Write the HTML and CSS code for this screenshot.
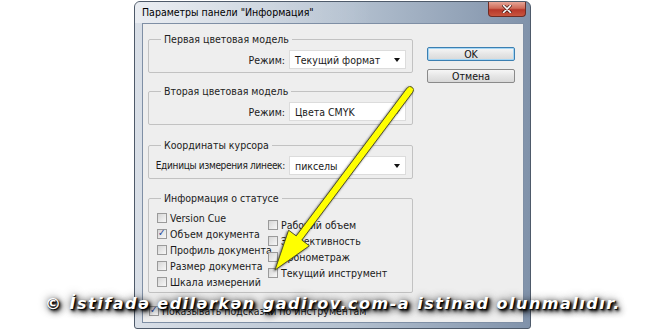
FILE: index.html
```html
<!DOCTYPE html>
<html lang="ru">
<head>
  <meta charset="UTF-8">
  <title>Параметры панели "Информация"</title>
  <link rel="stylesheet" href="styles.css">
</head>
<body>
  <div class="window">
    <div class="titlebar">
      <span class="title">Параметры панели "Информация"</span>
      <span class="close">
        <svg width="10" height="8" viewBox="0 0 10 8"><path d="M1.5 0.5 L8.5 7.5 M8.5 0.5 L1.5 7.5" stroke="#3b1712" stroke-width="3" stroke-linecap="round"/><path d="M1.5 0.5 L8.5 7.5 M8.5 0.5 L1.5 7.5" stroke="#fff" stroke-width="1.6" stroke-linecap="round"/></svg>
      </span>
    </div>
    <div class="client">
      <div class="main">
        <fieldset class="group">
          <legend>Первая цветовая модель</legend>
          <div class="row">
            <span class="label">Режим:</span>
            <div class="select">Текущий формат<span class="caret"></span></div>
          </div>
        </fieldset>
        <fieldset class="group">
          <legend>Вторая цветовая модель</legend>
          <div class="row">
            <span class="label">Режим:</span>
            <div class="select">Цвета CMYK<span class="caret"></span></div>
          </div>
        </fieldset>
        <fieldset class="group cursor">
          <legend>Координаты курсора</legend>
          <div class="row">
            <span class="label label-long">Единицы измерения линеек:</span>
            <div class="select">пикселы<span class="caret"></span></div>
          </div>
        </fieldset>
        <fieldset class="group status">
          <legend>Информация о статусе</legend>
          <div class="cols">
            <div class="col">
              <div class="check"><span class="box"></span>Version Cue</div>
              <div class="check"><span class="box checked"></span>Объем документа</div>
              <div class="check"><span class="box"></span>Профиль документа</div>
              <div class="check"><span class="box"></span>Размер документа</div>
              <div class="check"><span class="box"></span>Шкала измерений</div>
            </div>
            <div class="col col-right">
              <div class="check"><span class="box"></span>Рабочий объем</div>
              <div class="check"><span class="box"></span>Эффективность</div>
              <div class="check"><span class="box"></span>Хронометраж</div>
              <div class="check"><span class="box"></span>Текущий инструмент</div>
            </div>
          </div>
        </fieldset>
        <div class="check tips"><span class="box checked"></span>Показывать подсказки по инструментам</div>
      </div>
      <div class="buttons">
        <div class="btn btn-default">OK</div>
        <div class="btn">Отмена</div>
      </div>
    </div>
  </div>

  <svg class="arrow" width="660" height="330" viewBox="0 0 660 330">
    <path d="M407.2 87.9 L296.2 235.9 L288.6 230.2 L275 270 L309.4 245.8 L301.8 240.1 L412.8 92.1 A3.5 3.5 0 0 0 407.2 87.9 Z" fill="#ffff00" stroke="#55552a" stroke-width="1" stroke-linejoin="round"/>
  </svg>

  <div class="watermark">© İstifadə edilərkən gadirov.com-a istinad olunmalıdır.</div>
</body>
</html>
```

FILE: styles.css
```css
body {
  margin: 0;
  width: 660px;
  height: 330px;
  overflow: hidden;
  position: relative;
  background-color: #fff;
  color: #1a1a1a;
  font-family: "DejaVu Sans Condensed", "DejaVu Sans", sans-serif;
  font-stretch: condensed;
  font-size: 10.5px;
}
.window {
  margin: 1px 0 0 134px;
  width: 397px;
  height: 328px;
  box-sizing: border-box;
  border: 1px solid #4e5a6a;
  border-radius: 6px 6px 3px 3px;
  background: linear-gradient(to right, #d9dfe7, #b3c0cf 55%, #8092aa);
  padding: 0 6px 5px 7px;
  display: flex;
  flex-direction: column;
}
.titlebar {
  height: 21px;
  display: flex;
  justify-content: space-between;
  align-items: flex-start;
  background: linear-gradient(to right, rgba(255, 255, 255, 0.45), rgba(255, 255, 255, 0) 60%);
  margin: 0 -6px 0 -7px;
  padding: 0 4px 0 7px;
  border-radius: 5px 5px 0 0;
}
.title {
  margin-top: 4px;
  color: #000;
}
.close {
  width: 38px;
  height: 15px;
  box-sizing: border-box;
  border: 1px solid #6e2c24;
  border-top: none;
  border-radius: 0 0 4px 4px;
  background: linear-gradient(to bottom, #e6a597, #cf6a58 45%, #b8382a 55%, #c8553f);
  display: flex;
  justify-content: center;
  align-items: center;
}
.client {
  flex: 1;
  display: flex;
  background-color: #eeeeee;
  border: 1px solid #7f8fa5;
  padding: 9px 0 0 5px;
}
.main {
  width: 265px;
}
.group {
  margin: 0 0 12px;
  padding: 5px 6px 3px 8px;
  border: 1px solid #c2c2c2;
  border-radius: 2px;
  min-width: 0;
}
.group legend {
  margin-left: 4px;
  padding: 0 3px;
  line-height: 12px;
  color: #222;
}
.cursor {
  margin-top: 14px;
}
.status {
  margin: 13px 0 0;
  padding: 6px 6px 2px 8px;
}
.row {
  display: flex;
  justify-content: flex-end;
  align-items: center;
  gap: 4px;
}
.label {
  white-space: nowrap;
}
.label-long {
  font-size: 10px;
  letter-spacing: -0.3px;
}
.select {
  flex: none;
  width: 117px;
  height: 19px;
  box-sizing: border-box;
  background-color: #fff;
  border: 1px solid #dcdcdc;
  padding: 0 5px;
  display: flex;
  justify-content: space-between;
  align-items: center;
}
.caret {
  width: 0;
  height: 0;
  border-left: 3.5px solid transparent;
  border-right: 3.5px solid transparent;
  border-top: 4px solid #111;
  margin-top: 1px;
}
.cols {
  display: grid;
  grid-template-columns: 111px auto;
}
.col-right {
  padding-top: 7px;
}
.check {
  display: flex;
  align-items: center;
  gap: 3px;
  height: 16px;
  white-space: nowrap;
}
.box {
  flex: none;
  width: 10px;
  height: 10px;
  box-sizing: border-box;
  border: 1px solid #9a9a9a;
  background: linear-gradient(135deg, #d6d6d6, #f7f7f7);
  position: relative;
}
.box.checked::after {
  content: "✓";
  position: absolute;
  left: 0;
  top: -3px;
  font-size: 10px;
  color: #27449a;
}
.tips {
  margin: 10px 0 0 1px;
}
.buttons {
  width: 88px;
  margin-left: 14px;
  padding-top: 14px;
  display: flex;
  flex-direction: column;
  gap: 8px;
}
.btn {
  height: 14px;
  box-sizing: border-box;
  border: 1px solid #8a8a8a;
  border-radius: 2px;
  background: linear-gradient(to bottom, #f6f6f6, #e6e6e6 50%, #d8d8d8);
  display: flex;
  justify-content: center;
  align-items: center;
  color: #111;
}
.btn-default {
  border-color: #3c7fb1;
  box-shadow: inset 0 0 0 1px #a4d6f5;
}
.arrow {
  position: absolute;
  left: 0;
  top: 0;
  pointer-events: none;
  filter: drop-shadow(-1px 1px 1.2px rgba(0, 0, 0, 0.6));
}
.watermark {
  position: absolute;
  left: 45px;
  top: 294px;
  font-family: "DejaVu Sans", sans-serif;
  font-stretch: normal;
  font-weight: bold;
  font-style: italic;
  font-size: 16px;
  letter-spacing: 1.5px;
  color: #fff;
  white-space: nowrap;
  text-shadow: 1px 1px 1px #000, 2px 2px 3px #000, 3px 3px 6px #000, 0 0 8px rgba(0, 0, 0, 0.7);
}
```
